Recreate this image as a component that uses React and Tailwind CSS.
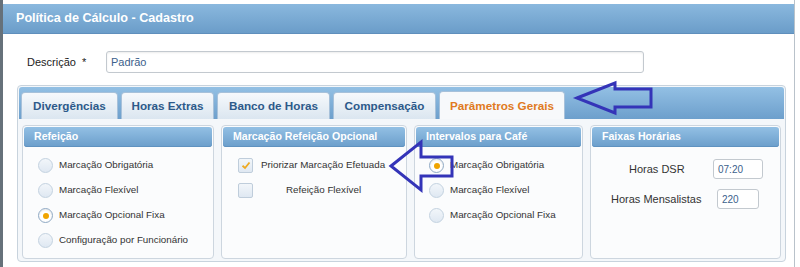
import React from "react";

const font = { fontFamily: '"Liberation Sans", Arial, sans-serif' };

function Radio({ checked }) {
  return checked ? (
    <span className="w-[15px] h-[15px] rounded-full border border-[#8fa9c4] bg-white flex items-center justify-center shrink-0 shadow-[inset_0_1px_2px_rgba(0,0,0,0.1)]">
      <span className="w-[6px] h-[6px] rounded-full bg-[#f0a400]" />
    </span>
  ) : (
    <span className="w-[15px] h-[15px] rounded-full border border-[#c3d2e0] bg-gradient-to-b from-[#f2f6fa] to-[#dfe8f2] shrink-0" />
  );
}

function Check({ checked }) {
  return (
    <span className="w-[15px] h-[15px] rounded-[2px] border border-[#bfcddb] bg-gradient-to-b from-[#f2f6fa] to-[#dfe8f2] flex items-center justify-center shrink-0">
      {checked && (
        <svg width="10" height="9" viewBox="0 0 10 9">
          <path d="M1.5 4.8 L4 7 L8.5 1.5" fill="none" stroke="#eeaa22" strokeWidth="1.8" />
        </svg>
      )}
    </span>
  );
}

function Group({ title, width, children }) {
  return (
    <div className={`${width} h-[134px] rounded-[4px] border border-[#cdd6df] bg-[#fbfcfd] p-[1px] flex flex-col`}>
      <div className="h-[20px] rounded-[3px] bg-gradient-to-b from-[#93c0e4] to-[#6b9ecb] flex items-center px-[10px] text-white font-bold text-[10.6px] whitespace-nowrap shadow-[inset_0_-1px_0_#5f92c0]">
        {title}
      </div>
      {children}
    </div>
  );
}

export default function App() {
  const tabs = [
    { t: "Divergências", w: "w-[97px]" },
    { t: "Horas Extras", w: "w-[93px]" },
    { t: "Banco de Horas", w: "w-[113px]" },
    { t: "Compensação", w: "w-[103px]" },
  ];
  return (
    <div className="w-[800px] h-[267px] bg-white relative overflow-hidden flex" style={font}>
      <div className="w-[3px] h-full bg-[#66717a]" />
      <div className="w-[792px] pt-[4px] border-r border-[#b9c2ca] flex flex-col">
        <div className="h-[30px] bg-gradient-to-b from-[#8ab8de] to-[#6b9dc9] border-b border-[#5f8fbc] flex items-center pl-[13px] text-white font-bold text-[12.6px]">
          Política de Cálculo - Cadastro
        </div>
        <div className="flex items-center h-[22px] mt-[17px]">
          <span className="ml-[24px] w-[79px] text-[11px] text-[#222] whitespace-nowrap">Descrição&nbsp; *</span>
          <div className="w-[538px] h-[22px] rounded-[3px] border border-[#c3c9cf] bg-white flex items-center px-[4px] text-[11px] text-[#3c5f8c] shadow-[inset_0_1px_2px_rgba(0,0,0,0.08)]">
            Padrão
          </div>
        </div>
        <div className="ml-[14px] mt-[12px] w-[769px] h-[177px] rounded-[4px] border border-[#c8d3dd] bg-[#f4f7fa] p-[1px] flex flex-col">
          <div className="h-[32px] rounded-t-[3px] bg-gradient-to-b from-[#93c0e4] to-[#6d9fcc] flex items-end gap-[3px] pl-[2px]">
            {tabs.map((x) => (
              <div
                key={x.t}
                className={`${x.w} h-[27px] rounded-t-[4px] border border-b-0 border-[#a7c1da] bg-gradient-to-b from-[#f6f9fc] to-[#dbe6f0] flex items-center justify-center text-[11.7px] font-bold text-[#2d5a8a] whitespace-nowrap`}
              >
                {x.t}
              </div>
            ))}
            <div className="w-[126px] h-[28px] rounded-t-[4px] border border-b-0 border-[#a7c1da] bg-[#f7f9fb] flex items-center justify-center text-[11.7px] font-bold text-[#e07a22] whitespace-nowrap">
              Parâmetros Gerais
            </div>
          </div>
          <div className="flex gap-[7px] pl-[3px] pt-[6px]">
            <Group title="Refeição" width="w-[192px]">
              <div className="flex flex-col pl-[14px] pt-[11px] gap-[10px] text-[9.8px] text-[#333] whitespace-nowrap">
                {[
                  ["Marcação Obrigatória", false],
                  ["Marcação Flexível", false],
                  ["Marcação Opcional Fixa", true],
                  ["Configuração por Funcionário", false],
                ].map(([t, c]) => (
                  <div key={t} className="flex items-center gap-[6px] h-[15px]">
                    <Radio checked={c} />
                    <span>{t}</span>
                  </div>
                ))}
              </div>
            </Group>
            <Group title="Marcação Refeição Opcional" width="w-[186px]">
              <div className="flex flex-col pl-[15px] pt-[11px] gap-[10px] text-[9.8px] text-[#333] whitespace-nowrap">
                <div className="flex items-center gap-[8px] h-[15px]">
                  <Check checked />
                  <span>Priorizar Marcação Efetuada</span>
                </div>
                <div className="flex items-center h-[15px]">
                  <Check />
                  <span className="ml-[33px]">Refeição Flexível</span>
                </div>
              </div>
            </Group>
            <Group title="Intervalos para Café" width="w-[169px]">
              <div className="flex flex-col pl-[13px] pt-[11px] gap-[10px] text-[9.8px] text-[#333] whitespace-nowrap">
                {[
                  ["Marcação Obrigatória", true],
                  ["Marcação Flexível", false],
                  ["Marcação Opcional Fixa", false],
                ].map(([t, c]) => (
                  <div key={t} className="flex items-center gap-[6px] h-[15px]">
                    <Radio checked={c} />
                    <span>{t}</span>
                  </div>
                ))}
              </div>
            </Group>
            <Group title="Faixas Horárias" width="w-[191px]">
              <div className="flex flex-col pt-[12px] gap-[10px] text-[11px] text-[#333] whitespace-nowrap">
                <div className="flex items-center h-[20px]">
                  <span className="ml-[37px] w-[84px]">Horas DSR</span>
                  <div className="w-[50px] h-[20px] rounded-[3px] border border-[#c3c9cf] bg-white flex items-center px-[4px] text-[10px] text-[#3c5f8c]">07:20</div>
                </div>
                <div className="flex items-center h-[20px]">
                  <span className="ml-[19px] w-[106px]">Horas Mensalistas</span>
                  <div className="w-[42px] h-[20px] rounded-[3px] border border-[#c3c9cf] bg-white flex items-center px-[4px] text-[10px] text-[#3c5f8c]">220</div>
                </div>
              </div>
            </Group>
          </div>
        </div>
      </div>
      <svg className="absolute left-0 top-0 pointer-events-none" width="800" height="267">
        <polygon
          points="577,98 615,83 615,89 651,89 651,107 615,107 615,113"
          fill="none"
          stroke="#3434b8"
          strokeWidth="3"
          strokeLinejoin="miter"
        />
        <polygon
          points="391,166 421,142 421,157 452,157 452,176 421,176 421,190"
          fill="none"
          stroke="#3434b8"
          strokeWidth="3"
          strokeLinejoin="miter"
        />
      </svg>
    </div>
  );
}
